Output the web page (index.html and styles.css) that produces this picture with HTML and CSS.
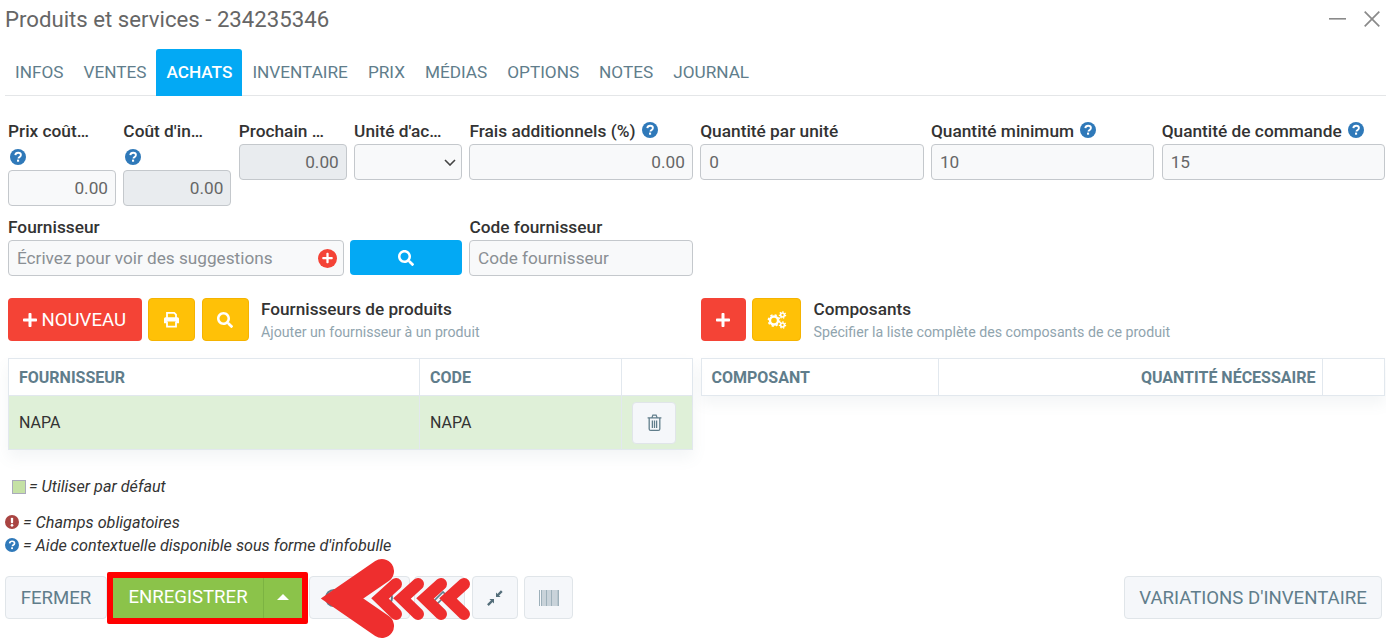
FILE: index.html
```html
<!DOCTYPE html>
<html lang="fr">
<head>
<meta charset="utf-8">
<title>Produits et services</title>
<link rel="stylesheet" href="styles.css">
</head>
<body>
<svg class="defs" width="0" height="0" aria-hidden="true">
  <symbol id="i-help" viewBox="0 0 16 16">
    <circle cx="8" cy="8" r="8" fill="currentColor"/>
    <path d="M5.3 6.1C5.5 4.6 6.6 3.7 8.1 3.7c1.6 0 2.8 1 2.8 2.3 0 1.1-.6 1.6-1.4 2.1-.7.4-1 .7-1 1.4" fill="none" stroke="#fff" stroke-width="1.9"/>
    <rect x="7" y="10.6" width="2.1" height="2.1" fill="#fff"/>
  </symbol>
  <symbol id="i-search" viewBox="0 0 512 512">
    <path fill="currentColor" d="M505 442.7L405.3 343c-4.5-4.5-10.6-7-17-7H372c27.6-35.3 44-79.7 44-128C416 93.1 322.9 0 208 0S0 93.1 0 208s93.1 208 208 208c48.3 0 92.7-16.4 128-44v16.3c0 6.4 2.5 12.5 7 17l99.7 99.7c9.4 9.4 24.6 9.4 33.9 0l28.3-28.3c9.4-9.4 9.4-24.6.1-34zM208 336c-70.7 0-128-57.2-128-128 0-70.7 57.2-128 128-128 70.7 0 128 57.2 128 128 0 70.7-57.2 128-128 128z"/>
  </symbol>
  <symbol id="i-plus" viewBox="0 0 448 512">
    <path fill="currentColor" d="M416 208H272V64c0-17.67-14.33-32-32-32h-32c-17.67 0-32 14.33-32 32v144H32c-17.67 0-32 14.33-32 32v32c0 17.67 14.33 32 32 32h144v144c0 17.67 14.33 32 32 32h32c17.67 0 32-14.33 32-32V304h144c17.67 0 32-14.33 32-32v-32c0-17.67-14.33-32-32-32z"/>
  </symbol>
</svg>

<header class="title-row">
  <h1 class="title">Produits et services - 234235346</h1>
  <div class="win-controls">
    <svg class="win-min" width="17" height="2" viewBox="0 0 17 2"><rect width="17" height="1.6" fill="#8a8a8a"/></svg>
    <svg class="win-close" width="16" height="16" viewBox="0 0 16 16"><path d="M.7.7l14.6 14.6M15.3.7L.7 15.3" stroke="#8a8a8a" stroke-width="1.7" fill="none"/></svg>
  </div>
</header>

<nav class="tabs">
  <a class="tab">INFOS</a>
  <a class="tab">VENTES</a>
  <a class="tab tab-active">ACHATS</a>
  <a class="tab">INVENTAIRE</a>
  <a class="tab">PRIX</a>
  <a class="tab">MÉDIAS</a>
  <a class="tab">OPTIONS</a>
  <a class="tab">NOTES</a>
  <a class="tab">JOURNAL</a>
</nav>

<main class="content">
  <section class="form-grid">
    <div class="field">
      <label class="lbl">Prix coût…</label>
      <span class="help-line"><svg class="help"><use href="#i-help"/></svg></span>
      <input class="inp num" value="0.00">
    </div>
    <div class="field">
      <label class="lbl">Coût d'in…</label>
      <span class="help-line"><svg class="help"><use href="#i-help"/></svg></span>
      <input class="inp num" value="0.00" disabled>
    </div>
    <div class="field">
      <label class="lbl">Prochain …</label>
      <input class="inp num" value="0.00" disabled>
    </div>
    <div class="field">
      <label class="lbl">Unité d'ac…</label>
      <select class="inp sel"><option></option></select>
    </div>
    <div class="field span2">
      <label class="lbl">Frais additionnels (%) <svg class="help"><use href="#i-help"/></svg></label>
      <input class="inp num" value="0.00">
    </div>
    <div class="field span2">
      <label class="lbl">Quantité par unité</label>
      <input class="inp" value="0">
    </div>
    <div class="field span2">
      <label class="lbl">Quantité minimum <svg class="help"><use href="#i-help"/></svg></label>
      <input class="inp" value="10">
    </div>
    <div class="field span2">
      <label class="lbl">Quantité de commande <svg class="help"><use href="#i-help"/></svg></label>
      <input class="inp" value="15">
    </div>
  </section>

  <section class="form-grid row-two">
    <div class="field span4">
      <label class="lbl">Fournisseur</label>
      <div class="supplier-row">
        <div class="suggest">
          <input class="inp" placeholder="Écrivez pour voir des suggestions">
          <span class="suggest-add"><svg width="11" height="12"><use href="#i-plus"/></svg></span>
        </div>
        <button class="btn-search"><svg width="16" height="16"><use href="#i-search"/></svg></button>
      </div>
    </div>
    <div class="field span2">
      <label class="lbl">Code fournisseur</label>
      <input class="inp inp-code" placeholder="Code fournisseur">
    </div>
  </section>

  <section class="panels">
    <div class="panel">
      <div class="panel-head">
        <button class="btn btn-red btn-new"><svg width="14" height="16"><use href="#i-plus"/></svg>NOUVEAU</button>
        <button class="btn btn-yellow btn-sq">
          <svg width="17" height="17" viewBox="0 0 17 17"><path fill="none" stroke="#fff" stroke-width="1.8" d="M4 7V1.9h7.2L13 3.6V7"/><path fill="#fff" d="M2.5 6.3h12A1.5 1.5 0 0 1 16 7.8v4.4h-3v-1.6H4v1.6H1V7.8a1.5 1.5 0 0 1 1.5-1.5z"/><path fill="none" stroke="#fff" stroke-width="1.8" d="M4 10.6v5h9v-5"/></svg>
        </button>
        <button class="btn btn-yellow btn-sq"><svg width="16" height="16"><use href="#i-search"/></svg></button>
        <div class="panel-title">
          <strong>Fournisseurs de produits</strong>
          <small>Ajouter un fournisseur à un produit</small>
        </div>
      </div>
      <table class="tbl">
        <colgroup><col class="c-sup"><col class="c-code"><col></colgroup>
        <thead><tr><th>FOURNISSEUR</th><th>CODE</th><th></th></tr></thead>
        <tbody>
          <tr class="row-default">
            <td>NAPA</td><td>NAPA</td>
            <td class="cell-act"><button class="btn-light btn-trash">
              <svg width="15" height="17" viewBox="0 0 14 16"><path fill="none" stroke="#607d8b" stroke-width="1.2" d="M2 4v10a1.4 1.4 0 0 0 1.4 1.4h7.2A1.4 1.4 0 0 0 12 14V4M.5 3.6h13M4.6 3.4l.9-2.4h3l.9 2.4M5 6.2v7M7 6.2v7M9 6.2v7"/></svg>
            </button></td>
          </tr>
        </tbody>
      </table>
    </div>
    <div class="panel">
      <div class="panel-head">
        <button class="btn btn-red btn-add"><svg width="14" height="16"><use href="#i-plus"/></svg></button>
        <button class="btn btn-yellow btn-cogs">
          <svg width="20" height="18" viewBox="0 0 20 18" fill="none" stroke="#fff">
            <circle cx="7" cy="9.5" r="4" stroke-width="2.4"/><circle cx="7" cy="9.5" r="5.6" stroke-width="1.6" stroke-dasharray="2.2 2.2"/>
            <circle cx="15.5" cy="4" r="1.9" stroke-width="1.5"/><circle cx="15.5" cy="4" r="3.1" stroke-width="1.2" stroke-dasharray="1.4 1.4"/>
            <circle cx="15.5" cy="14" r="1.9" stroke-width="1.5"/><circle cx="15.5" cy="14" r="3.1" stroke-width="1.2" stroke-dasharray="1.4 1.4"/>
          </svg>
        </button>
        <div class="panel-title">
          <strong>Composants</strong>
          <small>Spécifier la liste complète des composants de ce produit</small>
        </div>
      </div>
      <table class="tbl">
        <colgroup><col class="c-comp"><col><col class="c-end"></colgroup>
        <thead><tr><th>COMPOSANT</th><th class="right">QUANTITÉ NÉCESSAIRE</th><th></th></tr></thead>
      </table>
    </div>
  </section>

  <p class="legend legend-default"><span class="swatch"></span> = Utiliser par défaut</p>
  <div class="legend-notes">
    <p class="legend"><svg class="legend-ico ico-red" viewBox="0 0 16 16"><circle cx="8" cy="8" r="8" fill="currentColor"/><rect x="6.7" y="3" width="2.6" height="6.4" rx="1" fill="#fff"/><circle cx="8" cy="11.8" r="1.5" fill="#fff"/></svg> = Champs obligatoires</p>
    <p class="legend"><svg class="legend-ico ico-blue"><use href="#i-help"/></svg> = Aide contextuelle disponible sous forme d'infobulle</p>
  </div>
</main>

<footer class="bar">
  <button class="btn-light btn-text btn-close">FERMER</button>
  <div class="save-frame">
    <button class="save-main">ENREGISTRER</button>
    <button class="save-caret"><svg width="12" height="6" viewBox="0 0 12 6"><path d="M6 0l6 6H0z" fill="#fff"/></svg></button>
  </div>
  <button class="btn-light btn-a">
    <svg width="20" height="20" viewBox="0 0 20 20" fill="none" stroke="#607d8b" stroke-width="2.2"><circle cx="10" cy="10" r="8"/></svg>
  </button>
  <button class="btn-light btn-b">
    <svg width="18" height="18" viewBox="0 0 18 18" fill="none" stroke="#607d8b" stroke-width="2"><circle cx="9" cy="9" r="7"/></svg>
  </button>
  <button class="btn-light btn-c">
    <svg width="16" height="16" viewBox="0 0 16 16" fill="none" stroke="#607d8b" stroke-width="1.6"><path d="M2 14l1-4 8-8 3 3-8 8z"/></svg>
  </button>
  <button class="btn-light btn-d">
    <svg width="16" height="16" viewBox="0 0 16 16" fill="none" stroke="#546e7a"><path d="M14.8 1.2L10.5 5.5M.9 15.1l4.6-4.6" stroke-width="2.4"/><path d="M9 2.4V7h4.6zM7 13.6V9H2.4z" fill="#546e7a" stroke="none"/></svg>
  </button>
  <button class="btn-light btn-e">
    <svg width="20" height="16" viewBox="0 0 20 16" fill="#9db0ba"><rect x="0" width="1" height="16"/><rect x="2" width="1.5" height="16"/><rect x="4.5" width="1" height="16"/><rect x="6.5" width="2" height="16"/><rect x="9.5" width="1" height="16"/><rect x="11.5" width="2" height="16"/><rect x="14.5" width="1" height="16"/><rect x="16.5" width="1" height="16"/><rect x="18.3" width="1.7" height="16"/></svg>
  </button>
  <button class="btn-light btn-text btn-var">VARIATIONS D'INVENTAIRE</button>
</footer>

<svg class="arrow" width="160" height="90" viewBox="320 555 160 90" fill="none" stroke="#ee2e2e" stroke-linecap="round" aria-hidden="true">
  <path d="M382 571L342 598.5L382 626" stroke-width="24"/>
  <g stroke-width="12">
    <path d="M396 584L380 598.5L396 614"/>
    <path d="M418 584L402 598.5L418 614"/>
    <path d="M441 584L425 598.5L441 614"/>
    <path d="M464 584L448 598.5L464 614"/>
  </g>
</svg>
</body>
</html>
```

FILE: styles.css
```css
* { box-sizing: border-box; }
html, body { margin: 0; padding: 0; }
body {
  position: relative;
  width: 1386px;
  height: 640px;
  overflow: hidden;
  background: #fff;
  font-family: Roboto, "Liberation Sans", sans-serif;
  font-size: 16px;
  color: #333;
}
.defs { position: absolute; }
button { font-family: inherit; cursor: pointer; }

.title-row {
  height: 49px;
  padding: 6px 6px 0 5px;
  display: flex;
  justify-content: space-between;
  align-items: flex-start;
}
.title { margin: 0; font-size: 22.2px; line-height: 26px; font-weight: 400; color: #666; }
.win-controls { display: flex; align-items: center; gap: 18px; padding-top: 5px; }
.win-controls svg { display: block; }

.tabs {
  margin-left: 5px;
  height: 47px;
  display: flex;
  border-bottom: 1px solid #e4e6e8;
}
.tab {
  padding: 0 10px;
  line-height: 46px;
  font-size: 17.2px;
  color: #607d8b;
}
.tab-active {
  background: #03a9f4;
  color: #fff;
  font-weight: 500;
  border-radius: 3px 3px 0 0;
  height: 47px;
}

.content { padding: 23px 1px 0 8px; }
.form-grid {
  display: grid;
  grid-template-columns: repeat(12, 1fr);
  column-gap: 7.4px;
  align-items: start;
}
.row-two { margin-top: 9px; }
.field { min-width: 0; }
.span2 { grid-column: span 2; }
.span4 { grid-column: span 4; }
.lbl {
  display: block;
  height: 25px;
  line-height: 25px;
  font-size: 17.3px;
  font-weight: 500;
  color: #333;
  white-space: nowrap;
}
.help { width: 16px; height: 16px; color: #2f79b9; vertical-align: -1px; margin-left: 2px; }
.help-line { display: block; height: 26px; padding-top: 5px; }
.help-line .help { display: block; margin-left: 2px; }
.inp {
  display: block;
  width: 100%;
  height: 36px;
  padding: 0 8px;
  background: #f8f9fa;
  border: 1px solid #c4c8cc;
  border-radius: 4px;
  font-family: inherit;
  font-size: 17.2px;
  color: #666;
  outline: none;
}
.inp::placeholder { color: #8a8f94; opacity: 1; }
.inp:disabled { background: #e9ecef; }
.num { text-align: right; padding-right: 7px; }
.inp-code { padding-left: 7.5px; }
.sel {
  appearance: none;
  background: #f8f9fa url("data:image/svg+xml,%3Csvg xmlns='http://www.w3.org/2000/svg' width='12' height='7' viewBox='0 0 12 7'%3E%3Cpath d='M1 1l5 5 5-5' fill='none' stroke='%23444' stroke-width='1.6'/%3E%3C/svg%3E") no-repeat right 5px center;
}

.supplier-row { display: flex; gap: 6px; }
.suggest { position: relative; width: 336px; }
.suggest-add {
  position: absolute;
  right: 7px;
  top: 8.5px;
  width: 19px;
  height: 19px;
  border-radius: 50%;
  background: #f44336;
  color: #fff;
  display: flex;
  align-items: center;
  justify-content: center;
}
.btn-search {
  flex: 1;
  height: 35px;
  border: 0;
  border-radius: 4px;
  background: #03a9f4;
  color: #fff;
  display: flex;
  align-items: center;
  justify-content: center;
}

.panels {
  margin-top: 22px;
  display: grid;
  grid-template-columns: 1fr 1fr;
  column-gap: 8px;
}
.panel-head { display: flex; align-items: center; height: 43px; gap: 6.5px; }
.btn {
  height: 43px;
  border: 1px solid transparent;
  border-radius: 4px;
  color: #fff;
  padding: 0;
  display: flex;
  align-items: center;
  justify-content: center;
  font-size: 18.6px;
}
.btn-red { background: #f44336; }
.btn-yellow { background: #ffc107; border-color: #f5b301; }
.btn-new { width: 133.5px; gap: 4px; }
.btn-sq { width: 47px; }
.btn-add { width: 45px; }
.btn-cogs { width: 49px; }
.panel-title { margin: 1px 0 0 6px; display: flex; flex-direction: column; gap: 3px; }
.panel-title strong { font-size: 17.2px; line-height: 20px; font-weight: 500; color: #333; }
.panel-title small { font-size: 14.2px; line-height: 20px; color: #90a4ae; }

.tbl {
  margin-top: 17px;
  width: 100%;
  table-layout: fixed;
  border-collapse: collapse;
  box-shadow: 0 8px 14px rgba(96, 125, 139, 0.08);
}
.c-sup { width: 411px; }
.c-code { width: 202px; }
.c-comp { width: 237.5px; }
.c-end { width: 62.5px; }
.tbl th, .tbl td {
  border: 1px solid #e2e8ee;
  padding: 0 10px;
  text-align: left;
  font-size: 16px;
}
.tbl th { height: 37px; font-weight: 700; color: #607d8b; font-size: 16px; }
.tbl th.right { text-align: right; padding-right: 6px; }
.tbl td { height: 54px; font-weight: 400; color: #333; }
.row-default td { background: #dff0d8; }
.tbl .cell-act { padding: 0 0 0 10px; }
.btn-light {
  background: #f5f7fa;
  border: 1px solid #e0e5e9;
  border-radius: 4px;
  color: #607d8b;
  display: flex;
  align-items: center;
  justify-content: center;
  padding: 0;
}
.btn-trash { width: 44px; height: 42px; }

.legend { margin: 0; font-style: italic; font-size: 16.2px; line-height: 23px; color: #333; }
.legend-default { margin: 25px 0 0 4px; display: flex; align-items: center; gap: 3px; }
.swatch { width: 14px; height: 14px; background: #c5e1a5; border: 1px solid #aab; }
.legend-notes { margin: 13px 0 0 -3px; }
.legend-ico { width: 14px; height: 14px; vertical-align: -1px; }
.ico-red { color: #a94442; }
.ico-blue { color: #2f79b9; }

.bar {
  position: absolute;
  left: 5px;
  right: 4px;
  top: 572px;
  height: 52px;
  padding-top: 4px;
  display: flex;
  align-items: flex-start;
}
.btn-text { font-size: 18.6px; }
.bar .btn-light { height: 43px; }
.btn-close { width: 102px; }
.save-frame {
  margin: -4px 1px 0 0;
  width: 201px;
  height: 52px;
  border: 6px solid #f00;
  border-radius: 2px;
  display: flex;
  background: #8bc34a;
}
.save-main, .save-caret {
  border: 0;
  background: #8bc34a;
  color: #fff;
  font-size: 18.6px;
  padding: 0 0 2px;
  display: flex;
  align-items: center;
  justify-content: center;
}
.save-main { width: 150px; }
.save-caret { flex: 1; border-left: 1px solid #7cb342; }
.btn-a { width: 50px; }
.btn-b { width: 50px; margin-left: 1px; }
.btn-c { width: 51px; margin-left: 4px; }
.btn-d { width: 46px; margin-left: 7px; }
.btn-e { width: 49px; margin-left: 6px; }
.btn-var { margin-left: auto; width: 258px; }

.arrow { position: absolute; left: 320px; top: 555px; }
```
